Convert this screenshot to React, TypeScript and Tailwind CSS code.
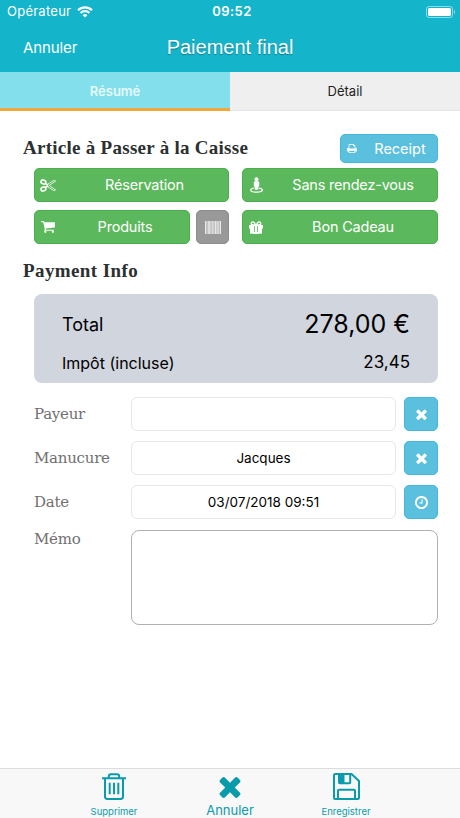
import { ReactNode } from 'react';

type IconProps = { className?: string };

function TimesIcon({ className }: IconProps) {
  return (
    <svg className={className} viewBox="302 302 1188 1252" fill="currentColor">
      <path d="M1490 1322q0 40-28 68l-136 136q-28 28-68 28t-68-28l-294-294-294 294q-28 28-68 28t-68-28l-136-136q-28-28-28-68t28-68l294-294-294-294q-28-28-28-68t28-68l136-136q28-28 68-28t68 28l294 294 294-294q28-28 68-28t68 28l136 136q28 28 28 68t-28 68l-294 294 294 294q28 28 28 68z" />
    </svg>
  );
}

function ClockIcon({ className }: IconProps) {
  return (
    <svg className={className} viewBox="128 128 1536 1536" fill="currentColor">
      <path d="M1024 544v448q0 14-9 23t-23 9h-320q-14 0-23-9t-9-23v-64q0-14 9-23t23-9h224v-352q0-14 9-23t23-9h64q14 0 23 9t9 23zm416 352q0-148-73-273t-198-198-273-73-273 73-198 198-73 273 73 273 198 198 273 73 273-73 198-198 73-273zm224 0q0 209-103 385.5t-279.5 279.5-385.5 103-385.5-103-279.5-279.5-103-385.5 103-385.5 279.5-279.5 385.5-103 385.5 103 279.5 279.5 103 385.5z" />
    </svg>
  );
}

function CartIcon({ className }: IconProps) {
  return (
    <svg className={className} viewBox="64 256 1664 1408" fill="currentColor">
      <path d="M704 1536q0 52-38 90t-90 38-90-38-38-90 38-90 90-38 90 38 38 90zm896 0q0 52-38 90t-90 38-90-38-38-90 38-90 90-38 90 38 38 90zm128-1088v512q0 24-16.500 42.500t-40.500 21.500l-1044 122q13 60 13 70 0 16-24 64h920q26 0 45 19t19 45-19 45-45 19h-1024q-26 0-45-19t-19-45q0-11 8-31.500t16-36 21.500-40 15.500-29.500l-177-823h-204q-26 0-45-19t-19-45 19-45 45-19h256q16 0 28.500 6.500t19.500 15.500 13 24.500 8 26 5.500 29.500 4.500 26h1201q26 0 45 19t19 45z" />
    </svg>
  );
}

function PrintIcon({ className }: IconProps) {
  return (
    <svg className={className} viewBox="64 128 1664 1536" fill="currentColor">
      <path d="M448 1536h896v-256h-896v256zm0-640h896v-384h-160q-40 0-68-28t-28-68v-160h-640v640zm1152 64q0-26-19-45t-45-19-45 19-19 45 19 45 45 19 45-19 19-45zm128 0v416q0 13-9.500 22.500t-22.500 9.500h-224v160q0 40-28 68t-68 28h-960q-40 0-68-28t-28-68v-160h-224q-13 0-22.500-9.500t-9.500-22.500v-416q0-79 56.500-135.500t135.500-56.500h64v-544q0-40 28-68t68-28h672q40 0 88 20t76 48l152 152q28 28 48 76t20 88v256h64q79 0 135.500 56.500t56.500 135.500z" />
    </svg>
  );
}

function ScissorsIcon({ className }: IconProps) {
  return (
    <svg className={className} viewBox="0 0 16 13" fill="none" stroke="currentColor">
      <ellipse cx="3.400" cy="3" rx="2.500" ry="1.900" strokeWidth="1.600" transform="rotate(22 3.400 3)" />
      <ellipse cx="3.400" cy="10" rx="2.500" ry="1.900" strokeWidth="1.600" transform="rotate(-22 3.400 10)" />
      <path d="M5.300 4.400 8.200 6.200M5.300 8.600 8.200 6.800" strokeWidth="1.600" />
      <path d="M7.300 7.500 13.800 11.600 15.600 10.900 9.200 6.500 15.600 2.100 13.800 1.400 7.300 5.500" strokeWidth=".8" strokeLinejoin="round" />
    </svg>
  );
}

function StreetViewIcon({ className }: IconProps) {
  return (
    <svg className={className} viewBox="0 0 13 16" fill="currentColor">
      <circle cx="6.500" cy="2.200" r="2" />
      <path d="M5 4.300h3a1.200 1.200 0 0 1 1.200 1.200v3.300q0 .6-.8.700V12q0 .8-.8.800H5.400q-.8 0-.8-.8V9.500q-.8-.1-.8-.7V5.500A1.200 1.200 0 0 1 5 4.300z" />
      <path d="M3.600 11.200C1.800 11.600.7 12.200.7 13c0 1.300 2.600 2.200 5.800 2.200s5.800-.9 5.800-2.200c0-.8-1.100-1.400-2.900-1.800" fill="none" stroke="currentColor" strokeWidth="1.200" strokeLinecap="round" />
    </svg>
  );
}

function GiftIcon({ className }: IconProps) {
  return (
    <svg className={className} viewBox="0 0 14 13" fill="currentColor">
      <path d="M.4 4H5v7.500h.8V4h2.400v7.500H9V4h4.600q.4 0 .4.400v2.800q0 .3-.4.300H13v4.300q0 .9-.9.900H1.900q-.9 0-.9-.9V7.500H.4q-.4 0-.4-.3V4.400Q0 4 .4 4z" />
      <path d="M5 11h4v1.700H5zM5 4h4v1H5z" />
      <path d="M6.600 4C5.800 2 5 .9 3.900.9 2.900.9 2.200 1.600 2.200 2.500S2.900 4 3.900 4zM7.400 4C8.200 2 9 .9 10.100.9c1 0 1.700.7 1.700 1.600S11.100 4 10.100 4z" fill="none" stroke="currentColor" strokeWidth="1.400" />
    </svg>
  );
}

function BarcodeIcon({ className }: IconProps) {
  return (
    <svg className={className} viewBox="0 0 16 13" fill="currentColor">
      <path d="M0 0h1v13H0zM1.800 0h.5v13h-.5zM3.200 0h1.500v13H3.200zM5.400 0h.5v13h-.5zM6.700 0h1v13h-1zM8.500 0h.7v13h-.7zM10 0h1.400v13H10zM12.100 0h.6v13h-.6zM13.400 0h.8v13h-.8zM15 0h1v13h-1z" />
      <path d="M0 0h16v13H0z" opacity=".4" />
    </svg>
  );
}

function TrashIcon({ className }: IconProps) {
  return (
    <svg className={className} viewBox="0 0 24 27" fill="none" stroke="currentColor" strokeWidth="2">
      <path d="M0 5.300h24M3 5.500v18q0 2.400 2.400 2.400h13.200q2.400 0 2.400-2.400v-18M6.800 5v-1.600q0-2.200 2.200-2.200h6q2.200 0 2.200 2.200V5" />
      <path d="M7.700 9.800v11.400M12 9.800v11.400M16.300 9.800v11.400" />
    </svg>
  );
}

function FloppyIcon({ className }: IconProps) {
  return (
    <svg className={className} viewBox="0 0 27 27" fill="none" stroke="currentColor" strokeWidth="2">
      <path d="M2.200 1h16.300L26 8v16.800q0 1.200-1.200 1.200H2.200Q1 26 1 24.800V2.200Q1 1 2.200 1z" strokeLinejoin="round" />
      <path d="M5 26v-8.300q0-1 1-1h15q1 0 1 1V26M6 1v8.500q0 .8.800.8h9.600q.8 0 .8-.8V1" />
      <path d="M6 1h5.500v9.300H6z" fill="currentColor" stroke="none" />
    </svg>
  );
}

function WifiIcon({ className }: IconProps) {
  return (
    <svg className={className} viewBox="0 0 16 12" fill="none" stroke="currentColor" strokeWidth="2.200">
      <path d="M1 4.300a10 10 0 0 1 14 0M3.600 7a6.300 6.300 0 0 1 8.800 0" />
      <path d="M8 11.600 5.600 9.200a3.400 3.400 0 0 1 4.800 0z" fill="currentColor" stroke="none" />
    </svg>
  );
}

function GreenButton({ icon, label, className }: { icon: ReactNode; label: string; className: string }) {
  return (
    <button
      className={`flex h-[34px] items-center rounded-[5px] border border-[#4cae4c] bg-[#5cb85c] text-[14.500px] tracking-[-0.2px] text-white ${className}`}
    >
      <span className="flex w-[26px] shrink-0 justify-center">{icon}</span>
      <span className="flex-1 text-center">{label}</span>
    </button>
  );
}

function Field({ label, value, icon }: { label: string; value: string; icon: ReactNode }) {
  return (
    <div className="flex h-[34px] items-center">
      <div className="w-[97px] font-['DejaVu_Serif',serif] text-[15px] tracking-[-0.25px] text-[#707070]">{label}</div>
      <div className="flex h-[34px] w-[265px] items-center justify-center rounded-[6px] border border-[#e6e6e6] text-[13.500px]">
        {value}
      </div>
      <button className="ml-2 flex h-[34px] w-[34px] items-center justify-center rounded-[5px] border border-[#46b8da] bg-[#5bc0de] text-white">
        {icon}
      </button>
    </div>
  );
}

function App() {
  return (
    <div className="flex h-[818px] w-[460px] flex-col bg-white font-['Inter',sans-serif] text-black">
      <header className="h-[72px] shrink-0 bg-[#14b4ca] text-white">
        <div className="grid h-6 grid-cols-[1fr_auto_1fr] items-center pr-[5px] pl-[7px] text-[13px]">
          <div className="flex items-center gap-[6px]">
            <span className="tracking-[0.25px]">Opérateur</span>
            <WifiIcon className="h-3 w-4" />
          </div>
          <span className="pl-[2px] font-semibold tracking-[0.4px]">09:52</span>
          <div className="flex items-center justify-end gap-px">
            <div className="h-3 w-[27px] rounded-[3px] border border-white/50 p-px">
              <div className="h-full rounded-[1.500px] bg-white" />
            </div>
            <div className="h-1 w-px rounded-r bg-white/50" />
          </div>
        </div>
        <div className="grid h-12 grid-cols-[1fr_auto_1fr] items-center">
          <span className="pt-px pl-[23px] text-[15px] tracking-[-0.1px]">Annuler</span>
          <h1 className="pb-[2px] font-['Liberation_Sans',sans-serif] text-[20px] leading-6 [text-shadow:0_1px_1px_rgba(0,0,0,0.3)]">
            Paiement final
          </h1>
        </div>
      </header>

      <nav className="grid h-[39px] shrink-0 grid-cols-2 text-[13px]">
        <div className="flex items-center justify-center border-b-[3px] border-[#f2a63c] bg-[#82dfeb] pt-[3px] font-semibold text-white/80">
          Résumé
        </div>
        <div className="flex items-center justify-center border-b border-[#e4e4e4] bg-[#efefef] pt-px text-[#222]">
          Détail
        </div>
      </nav>

      <main className="flex-1 pr-[22px] pl-[34px]">
        <div className="mt-[23px] flex h-[29px] items-center justify-between">
          <h2 className="-ml-[11px] font-['Liberation_Serif',serif] text-[19px] font-bold tracking-[0.27px] text-[#2b3030]">
            Article à Passer à la Caisse
          </h2>
          <button className="flex h-[29px] w-[98px] items-center rounded-[5px] border border-[#46b8da] bg-[#5bc0de] text-[14.500px] text-white">
            <span className="flex w-[22px] justify-center">
              <PrintIcon className="h-[9px] w-[10px]" />
            </span>
            <span className="flex-1 text-center">Receipt</span>
          </button>
        </div>
        <div className="mt-[5px] flex justify-between">
          <GreenButton className="w-[195px]" icon={<ScissorsIcon className="h-[13px] w-4" />} label="Réservation" />
          <GreenButton className="w-[196px]" icon={<StreetViewIcon className="h-4 w-[13px]" />} label="Sans rendez-vous" />
        </div>
        <div className="mt-2 flex justify-between">
          <GreenButton className="w-[156px]" icon={<CartIcon className="h-3 w-[14px]" />} label="Produits" />
          <button className="mr-auto ml-[6px] flex h-[34px] w-[33px] items-center justify-center rounded-[5px] border border-[#8c8c8c] bg-[#999] text-white/70">
            <BarcodeIcon className="h-[13px] w-4" />
          </button>
          <GreenButton className="w-[196px]" icon={<GiftIcon className="h-[13px] w-[14px]" />} label="Bon Cadeau" />
        </div>

        <h2 className="mt-[15px] -ml-[11px] font-['Liberation_Serif',serif] text-[19px] leading-6 font-bold tracking-[0.4px] text-[#2b3030]">
          Payment Info
        </h2>
        <section className="mt-[11px] h-[89px] rounded-[8px] bg-[#d1d5de] px-7 pt-[11px]">
          <div className="flex h-[38px] items-center justify-between">
            <span className="text-[18px]">Total</span>
            <span className="pt-px text-[25px]">278,00 €</span>
          </div>
          <div className="flex h-[39px] items-center justify-between">
            <span className="text-base">Impôt (incluse)</span>
            <span className="pt-px text-[17px]">23,45</span>
          </div>
        </section>

        <div className="mt-[14px] flex w-[404px] flex-col gap-[10px]">
          <Field label="Payeur" value="" icon={<TimesIcon className="size-[11px]" />} />
          <Field label="Manucure" value="Jacques" icon={<TimesIcon className="size-[11px]" />} />
          <Field label="Date" value="03/07/2018 09:51" icon={<ClockIcon className="size-[13px]" />} />
          <div className="flex pt-px">
            <div className="-mt-px w-[97px] font-['DejaVu_Serif',serif] text-[15px] leading-5 tracking-[-0.25px] text-[#707070]">
              Mémo
            </div>
            <div className="h-[95px] w-[307px] rounded-[8px] border border-[#b0b0b0]" />
          </div>
        </div>
      </main>

      <footer className="flex h-[50px] shrink-0 justify-center border-t border-[#dcdcdc] bg-[#f8f8f8] text-[#0a9bab]">
        <div className="flex w-[116px] flex-col items-center pt-1">
          <TrashIcon className="h-[27px] w-6" />
          <span className="mt-[6px] text-[9.500px] leading-3">Supprimer</span>
        </div>
        <div className="flex w-[116px] flex-col items-center pt-[7px]">
          <TimesIcon className="h-[22px] w-[22px]" />
          <span className="mt-1 text-[13px] leading-4">Annuler</span>
        </div>
        <div className="flex w-[116px] flex-col items-center pt-1">
          <FloppyIcon className="size-[27px]" />
          <span className="mt-[6px] text-[9.500px] leading-3">Enregistrer</span>
        </div>
      </footer>
    </div>
  );
}

export default App;
